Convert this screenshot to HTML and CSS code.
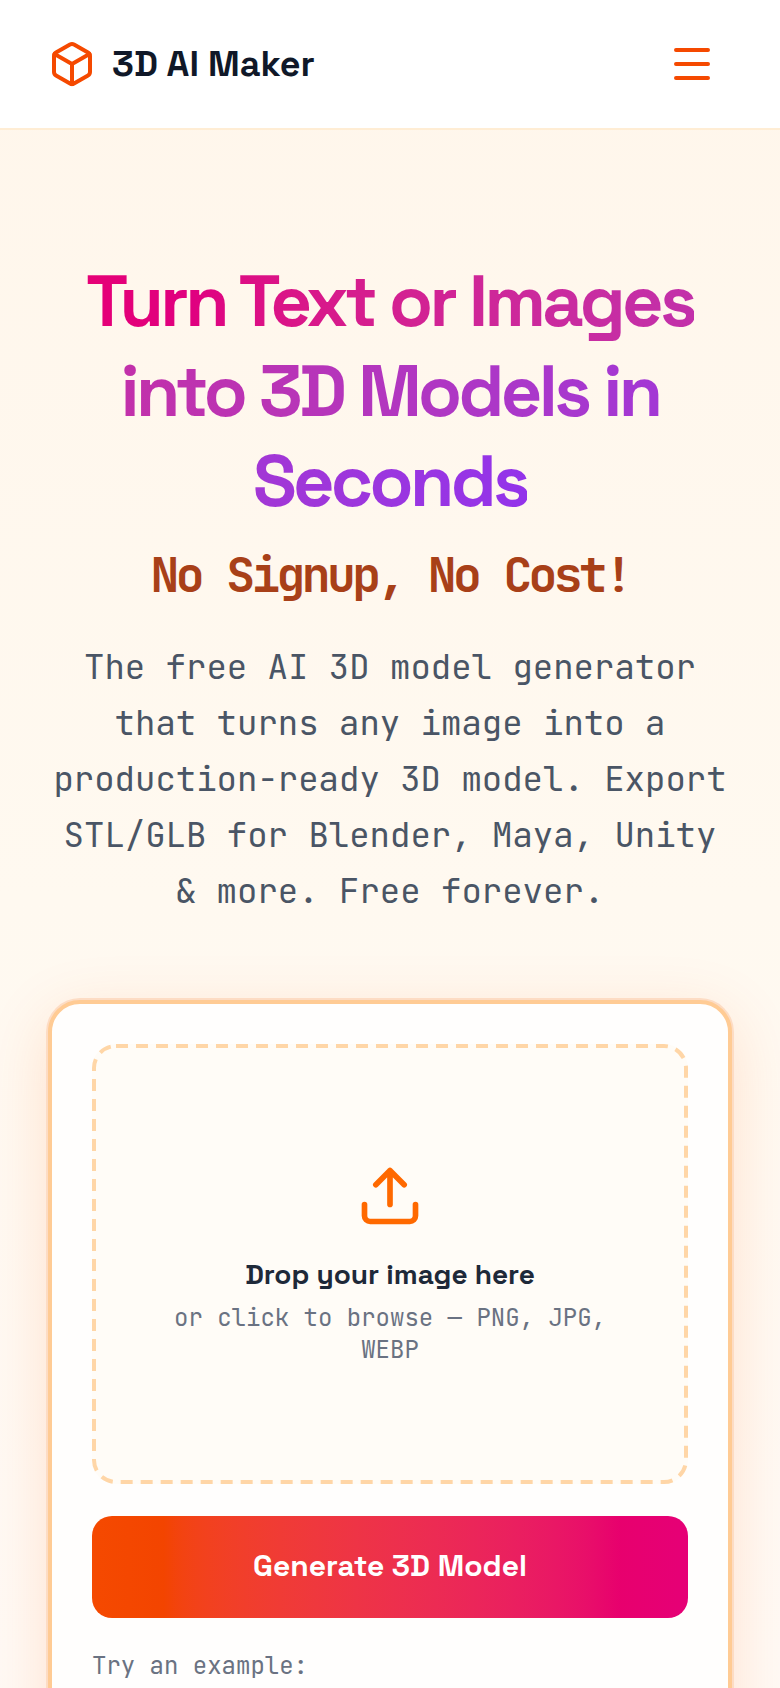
FILE: index.html
```
<!DOCTYPE html>
<html lang="en">
<head>
  <meta charset="UTF-8">
  <meta name="viewport" content="width=device-width, initial-scale=1.0">
  <title>3D AI Maker</title>
  <link rel="stylesheet" href="styles.css">
</head>
<body>
  <header class="site-header">
    <a href="#" class="brand">
      <svg class="brand-icon" viewBox="0 0 24 24" aria-hidden="true">
        <path d="M21 16V8a2 2 0 0 0-1-1.73l-7-4a2 2 0 0 0-2 0l-7 4A2 2 0 0 0 3 8v8a2 2 0 0 0 1 1.73l7 4a2 2 0 0 0 2 0l7-4A2 2 0 0 0 21 16z"/>
        <path d="M3.27 6.96 12 12.01l8.73-5.05M12 22.08V12"/>
      </svg>
      <span>3D AI Maker</span>
    </a>
    <button type="button" class="menu-button" aria-label="Open menu">
      <svg viewBox="0 0 24 24" aria-hidden="true">
        <path d="M4 5h16M4 12h16M4 19h16"/>
      </svg>
    </button>
  </header>

  <main class="hero">
    <h1 class="hero-title">
      <span class="hero-gradient">Turn Text or Images into 3D Models in Seconds</span>
      <span class="hero-tagline">No Signup, No Cost!</span>
    </h1>
    <p class="hero-text">The free AI 3D model generator that turns any image into a production-ready 3D model. Export STL/GLB for Blender, Maya, Unity &amp; more. Free forever.</p>

    <!-- Generator -->
    <section class="card">
      <button type="button" class="dropzone">
        <svg class="dropzone-outline" aria-hidden="true">
          <rect x="2" y="2" rx="22"/>
        </svg>
        <svg class="upload-icon" viewBox="0 0 24 24" aria-hidden="true">
          <path d="M21 15v4a2 2 0 0 1-2 2H5a2 2 0 0 1-2-2v-4M17 8l-5-5-5 5M12 3v12"/>
        </svg>
        <span class="dropzone-title">Drop your image here</span>
        <span class="dropzone-hint">or click to browse — PNG, JPG, WEBP</span>
      </button>
      <button type="button" class="generate-button">Generate 3D Model</button>
      <p class="examples-label">Try an example:</p>
    </section>
  </main>
</body>
</html>
```

FILE: styles.css
```
:root {
  --orange: #f54900;
  --heading-font: "Space Grotesk", Inter, sans-serif;
  --mono-font: "JetBrains Mono", "DejaVu Sans Mono", monospace;
}

* {
  box-sizing: border-box;
}

body {
  margin: 0;
  font-family: var(--mono-font);
  background: linear-gradient(#fff6eb, #fff9f0 50%, #fffaf6);
  overflow-x: hidden;
}

button {
  font: inherit;
  cursor: pointer;
}

svg {
  display: block;
  fill: none;
  stroke: currentColor;
  stroke-width: 2;
  stroke-linecap: round;
  stroke-linejoin: round;
}

/* Header */
.site-header {
  display: flex;
  align-items: center;
  justify-content: space-between;
  padding: 24px 48px;
  background: white;
  border-bottom: 2px solid #ffedd4;
}

.brand {
  display: flex;
  align-items: center;
  gap: 16px;
  font-family: var(--heading-font);
  font-size: 36px;
  font-weight: 700;
  line-height: 48px;
  color: #101828;
  text-decoration: none;
}

.brand-icon {
  width: 48px;
  height: 48px;
  color: var(--orange);
}

.menu-button {
  padding: 16px;
  border: none;
  background: transparent;
  color: var(--orange);
}

.menu-button svg {
  width: 48px;
  height: 48px;
}

/* Hero */
.hero {
  padding: 126px 48px 48px;
  text-align: center;
}

.hero-title {
  margin: 0;
  font-family: var(--heading-font);
  font-size: 72px;
  font-weight: 700;
  line-height: 90px;
  letter-spacing: -0.05em;
}

.hero-gradient {
  background: linear-gradient(to right in oklab, oklch(59.2% 0.249 0.584), #9333ea);
  -webkit-background-clip: text;
  background-clip: text;
  color: transparent;
}

.hero-tagline {
  display: block;
  margin-top: 17px;
  font-family: var(--mono-font);
  font-size: 48px;
  line-height: 64px;
  color: #a84018;
}

.hero-text {
  margin: 32px 0 81px;
  font-size: 34px;
  line-height: 56px;
  color: #4a5565;
}

/* Generator card */
.card {
  padding: 40px;
  border: 4px solid #ffcb94;
  border-radius: 32px;
  background: #fffefd;
  box-shadow: 0 0 0 2px #fddcc4, 0 16px 64px rgba(255, 95, 0, 0.16);
}

.dropzone {
  position: relative;
  display: flex;
  flex-direction: column;
  align-items: center;
  justify-content: center;
  width: 100%;
  min-height: 440px;
  padding: 52px;
  border: none;
  border-radius: 24px;
  background: #fffcf7;
}

.dropzone-outline {
  position: absolute;
  inset: 0;
  width: 100%;
  height: 100%;
  color: #ffd6a7;
}

.dropzone-outline rect {
  width: calc(100% - 4px);
  height: calc(100% - 4px);
  stroke-width: 4;
  stroke-dasharray: 12 8;
  stroke-linecap: butt;
}

.upload-icon {
  width: 68px;
  height: 68px;
  color: #ff6900;
}

.dropzone-title {
  margin: 24px 0 8px;
  font-family: var(--heading-font);
  font-size: 28px;
  font-weight: 600;
  line-height: 40px;
  color: #1e2939;
}

.dropzone-hint {
  font-size: 24px;
  line-height: 32px;
  color: #6a7282;
}

.generate-button {
  width: 100%;
  margin-top: 32px;
  padding: 30px 30px 32px;
  border: none;
  border-radius: 20px;
  background: linear-gradient(to right in oklab, oklch(64.6% 0.222 41.116), oklch(59.2% 0.249 0.584));
  font-family: var(--heading-font);
  font-size: 30px;
  font-weight: 600;
  line-height: 40px;
  color: white;
}

.examples-label {
  margin: 32px 0 24px;
  font-size: 24px;
  line-height: 32px;
  text-align: left;
  color: #6a7282;
}
```
